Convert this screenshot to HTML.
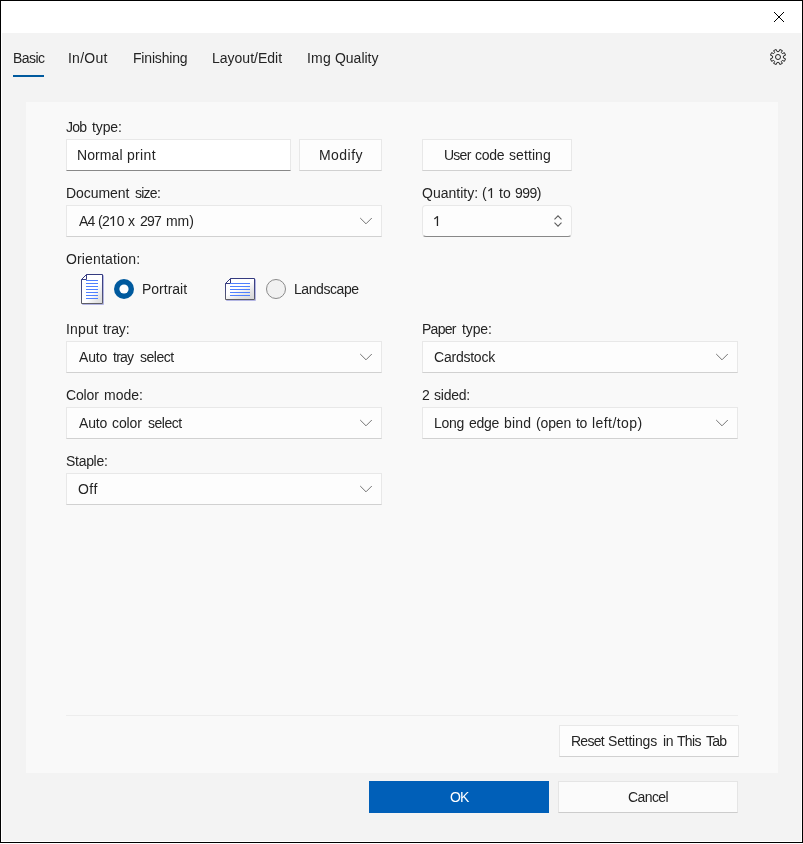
<!DOCTYPE html>
<html lang="en"><head><meta charset="utf-8"><title>Printing Preferences</title>
<style>
html,body{margin:0;padding:0;background:#fff;}
body{width:803px;height:844px;position:relative;overflow:hidden;font-family:"Liberation Sans",sans-serif;font-size:14px;color:#242424;}
.a,.t,.dd,.btn,.box{position:absolute;}
.one{display:inline-block;vertical-align:baseline;overflow:visible;}
.t{line-height:16px;white-space:nowrap;display:block;will-change:transform;}
.win{position:absolute;left:0;top:0;width:801px;height:841px;border:1px solid #000;background:#fff;}
.client{position:absolute;left:2px;top:33px;width:799px;height:808px;background:#f3f3f3;}
.panel{position:absolute;left:26px;top:102px;width:752px;height:671px;background:#f9f9f9;}
.dd{background:#fdfdfd;border:1px solid #e8e8e8;border-bottom-color:#d1d1d1;}
.btn{background:#fdfdfd;border:1px solid #e8e8e8;border-bottom-color:#d1d1d1;}
.btn.g{background:#fbfbfb;border-color:#e5e5e5;border-bottom-color:#cccccc;}
.tb{position:absolute;background:#fff;border:1px solid #e8e8e8;border-bottom-color:#888888;}
.num{position:absolute;background:#fdfdfd;border:1px solid #e8e8e8;border-bottom-color:#888888;border-radius:4px;}
</style></head><body>
<div class="win"></div>
<div class="client"></div>
<svg class="a" style="left:772px;top:10px" width="14" height="14" viewBox="0 0 14 14"><path d="M2 2 L12 12 M12 2 L2 12" stroke="#000" stroke-width="1" fill="none"/></svg>
<div class="a" style="left:13px;top:75px;width:31px;height:2px;background:#005a9e"></div>
<svg class="a" style="left:770px;top:49px" width="16" height="16" viewBox="0 0 16 16"><path d="M8.93 2.58 L9.79 0.46 L12.34 1.58 L11.36 3.65 L12.35 4.64 L14.42 3.66 L15.54 6.21 L13.42 7.07 L13.42 8.93 L15.54 9.79 L14.42 12.34 L12.35 11.36 L11.36 12.35 L12.34 14.42 L9.79 15.54 L8.93 13.42 L7.07 13.42 L6.21 15.54 L3.66 14.42 L4.64 12.35 L3.65 11.36 L1.58 12.34 L0.46 9.79 L2.58 8.93 L2.58 7.07 L0.46 6.21 L1.58 3.66 L3.65 4.64 L4.64 3.65 L3.66 1.58 L6.21 0.46 L7.07 2.58 Z" fill="none" stroke="#242424" stroke-width="1" stroke-linejoin="round"/><circle cx="8" cy="8" r="2.5" fill="none" stroke="#242424" stroke-width="1"/></svg>
<div class="panel"></div>

<div class="tb" style="left:66px;top:139px;width:223px;height:30px"></div>
<div class="btn" style="left:299px;top:139px;width:81px;height:30px"></div>
<div class="btn" style="left:422px;top:139px;width:148px;height:30px"></div>
<div class="dd" style="left:66px;top:205px;width:314px;height:30px"></div><svg class="a" style="left:358px;top:215px" width="16" height="12" viewBox="0 0 16 12"><path d="M2.2 3 L8 8.8 L13.8 3" fill="none" stroke="#757575" stroke-width="1"/></svg>
<div class="num" style="left:422px;top:205px;width:148px;height:30px"></div>
<svg class="a" style="left:550px;top:213px" width="16" height="16" viewBox="0 0 16 16"><path d="M4.5 6.3 L8 2.8 L11.5 6.3 M4.5 9.7 L8 13.2 L11.5 9.7" fill="none" stroke="#5a5a5a" stroke-width="1.05"/></svg>

<!-- portrait icon -->
<svg class="a" style="left:80px;top:273px" width="26" height="34" viewBox="0 0 26 34">
<defs>
<linearGradient id="gs" x1="0" y1="0" x2="0" y2="1"><stop offset="0" stop-color="#353b80"/><stop offset="0.55" stop-color="#454a82"/><stop offset="1" stop-color="#5e5e66"/></linearGradient>
<linearGradient id="gf" x1="0.15" y1="0.15" x2="1" y2="1"><stop offset="0" stop-color="#ffffff"/><stop offset="0.5" stop-color="#ffffff"/><stop offset="0.78" stop-color="#e6e6e6"/><stop offset="1" stop-color="#dadada"/></linearGradient>
<linearGradient id="gf2" x1="0.2" y1="0" x2="0.95" y2="1"><stop offset="0" stop-color="#ffffff"/><stop offset="0.42" stop-color="#ffffff"/><stop offset="0.72" stop-color="#e4e4e4"/><stop offset="1" stop-color="#d6d6d6"/></linearGradient>
</defs>
<path d="M7.5 2.5 H23.5 V31.5 H2.5 V7.5 Z" fill="none" stroke="#b4b6e4" stroke-width="1"/>
<path d="M6.5 1.5 H22.5 V30.5 H1.5 V6.5 Z" fill="url(#gf)" stroke="url(#gs)" stroke-width="1"/>
<path d="M6.5 1.5 V6.5 H1.5 Z" fill="#fff" stroke="#353b80" stroke-width="1" stroke-linejoin="miter"/>
<path d="M6 7.5H18 M6 10.5H18 M6 13.5H18 M6 16.5H18 M6 19.5H18 M6 22.5H18 M6 25.5H18" stroke="#4f80ff" stroke-width="1"/>
</svg>
<!-- landscape icon -->
<svg class="a" style="left:224px;top:277px" width="34" height="26" viewBox="0 0 34 26">
<path d="M7.5 2.5 H31.5 V23.5 H2.5 V7.5 Z" fill="none" stroke="#b4b6e4" stroke-width="1"/>
<path d="M6.5 1.5 H30.5 V22.5 H1.5 V6.5 Z" fill="url(#gf2)" stroke="url(#gs)" stroke-width="1"/>
<path d="M6.5 1.5 V6.5 H1.5 Z" fill="#fff" stroke="#353b80" stroke-width="1"/>
<path d="M6 6.5H26 M6 9.5H26 M6 12.5H26 M6 15.5H26 M6 18.5H26" stroke="#4f80ff" stroke-width="1"/>
</svg>
<!-- radios -->
<svg class="a" style="left:112px;top:277px" width="24" height="24" viewBox="0 0 24 24"><circle cx="12" cy="12" r="10" fill="#005a9e"/><circle cx="12" cy="12" r="4.6" fill="#fff"/></svg>
<svg class="a" style="left:264px;top:277px" width="24" height="24" viewBox="0 0 24 24"><circle cx="12" cy="12" r="9.5" fill="#f1f1f1" stroke="#8a8a8a" stroke-width="1"/></svg>

<div class="dd" style="left:66px;top:341px;width:314px;height:30px"></div><svg class="a" style="left:358px;top:351px" width="16" height="12" viewBox="0 0 16 12"><path d="M2.2 3 L8 8.8 L13.8 3" fill="none" stroke="#757575" stroke-width="1"/></svg>
<div class="dd" style="left:422px;top:341px;width:314px;height:30px"></div><svg class="a" style="left:714px;top:351px" width="16" height="12" viewBox="0 0 16 12"><path d="M2.2 3 L8 8.8 L13.8 3" fill="none" stroke="#757575" stroke-width="1"/></svg>
<div class="dd" style="left:66px;top:407px;width:314px;height:30px"></div><svg class="a" style="left:358px;top:417px" width="16" height="12" viewBox="0 0 16 12"><path d="M2.2 3 L8 8.8 L13.8 3" fill="none" stroke="#757575" stroke-width="1"/></svg>
<div class="dd" style="left:422px;top:407px;width:314px;height:30px"></div><svg class="a" style="left:714px;top:417px" width="16" height="12" viewBox="0 0 16 12"><path d="M2.2 3 L8 8.8 L13.8 3" fill="none" stroke="#757575" stroke-width="1"/></svg>
<div class="dd" style="left:66px;top:473px;width:314px;height:30px"></div><svg class="a" style="left:358px;top:483px" width="16" height="12" viewBox="0 0 16 12"><path d="M2.2 3 L8 8.8 L13.8 3" fill="none" stroke="#757575" stroke-width="1"/></svg>

<div class="a" style="left:66px;top:715px;width:672px;height:1px;background:#ededed"></div>
<div class="btn" style="left:559px;top:725px;width:178px;height:30px"></div>
<div class="a" style="left:369px;top:781px;width:180px;height:32px;background:#005fb8"></div>
<div class="btn g" style="left:558px;top:781px;width:178px;height:30px"></div>

<span class="t" id="tab1_0" style="left:13px;top:50px;letter-spacing:-0.547px;">Basic</span>
<span class="t" id="tab2_0" style="left:68px;top:50px;letter-spacing:0.235px;">In/Out</span>
<span class="t" id="tab3_0" style="left:133px;top:50px;letter-spacing:-0.184px;">Finishing</span>
<span class="t" id="tab4_0" style="left:212px;top:50px;letter-spacing:-0.002px;">Layout/Edit</span>
<span class="t" id="tab5_0" style="left:307px;top:50px;letter-spacing:0.178px;">Img</span>
<span class="t" id="tab5_1" style="left:335px;top:50px;letter-spacing:-0.028px;">Quality</span>
<span class="t" id="l1_0" style="left:66px;top:119px;letter-spacing:-0.750px;">Job</span>
<span class="t" id="l1_1" style="left:92px;top:119px;letter-spacing:-0.118px;">type:</span>
<span class="t" id="v1_0" style="left:77px;top:147px;letter-spacing:0.101px;">Normal</span>
<span class="t" id="v1_1" style="left:127px;top:147px;letter-spacing:0.322px;">print</span>
<span class="t" id="b1_0" style="left:319px;top:147px;letter-spacing:0.458px;">Modify</span>
<span class="t" id="b2_0" style="left:444px;top:147px;letter-spacing:-0.750px;">User</span>
<span class="t" id="b2_1" style="left:475px;top:147px;letter-spacing:-0.249px;">code</span>
<span class="t" id="b2_2" style="left:509px;top:147px;letter-spacing:0.087px;">setting</span>
<span class="t" id="l2_0" style="left:66px;top:185px;letter-spacing:-0.057px;">Document</span>
<span class="t" id="l2_1" style="left:135px;top:185px;letter-spacing:-0.750px;">size:</span>
<span class="t" id="v2_0" style="left:79px;top:213px;letter-spacing:-0.750px;">A4</span>
<span class="t" id="v2_1" style="left:98px;top:213px;letter-spacing:-0.699px;">(2<svg class="one" width="7.8" height="10" viewBox="0 0 7.8 10"><path d="M4.45 0.15 V10" stroke="#242424" stroke-width="1.3" fill="none"/><path d="M4.3 0.55 L1.35 2.95" stroke="#242424" stroke-width="1.1" fill="none"/></svg>0</span>
<span class="t" id="v2_2" style="left:128px;top:213px;letter-spacing:0.000px;">x</span>
<span class="t" id="v2_3" style="left:140px;top:213px;letter-spacing:-0.750px;">297</span>
<span class="t" id="v2_4" style="left:166px;top:213px;letter-spacing:-0.045px;">mm)</span>
<span class="t" id="l3_0" style="left:422px;top:185px;letter-spacing:0.013px;">Quantity:</span>
<span class="t" id="l3_1" style="left:482px;top:185px;letter-spacing:0.275px;">(<svg class="one" width="7.8" height="10" viewBox="0 0 7.8 10"><path d="M4.45 0.15 V10" stroke="#242424" stroke-width="1.3" fill="none"/><path d="M4.3 0.55 L1.35 2.95" stroke="#242424" stroke-width="1.1" fill="none"/></svg></span>
<span class="t" id="l3_2" style="left:499px;top:185px;letter-spacing:0.122px;">to</span>
<span class="t" id="l3_3" style="left:515px;top:185px;letter-spacing:-0.567px;">999)</span>
<span class="t" id="v3_0" style="left:433px;top:213px;letter-spacing:0.000px;"><svg class="one" width="7.8" height="10" viewBox="0 0 7.8 10"><path d="M4.45 0.15 V10" stroke="#242424" stroke-width="1.3" fill="none"/><path d="M4.3 0.55 L1.35 2.95" stroke="#242424" stroke-width="1.1" fill="none"/></svg></span>
<span class="t" id="l4_0" style="left:66px;top:251px;letter-spacing:0.152px;">Orientation:</span>
<span class="t" id="r1_0" style="left:142px;top:281px;letter-spacing:-0.001px;">Portrait</span>
<span class="t" id="r2_0" style="left:294px;top:281px;letter-spacing:-0.436px;">Landscape</span>
<span class="t" id="l5_0" style="left:66px;top:321px;letter-spacing:0.189px;">Input</span>
<span class="t" id="l5_1" style="left:103px;top:321px;letter-spacing:-0.165px;">tray:</span>
<span class="t" id="v5_0" style="left:79px;top:349px;letter-spacing:-0.202px;">Auto</span>
<span class="t" id="v5_1" style="left:113px;top:349px;letter-spacing:-0.750px;">tray</span>
<span class="t" id="v5_2" style="left:140px;top:349px;letter-spacing:-0.462px;">select</span>
<span class="t" id="l6_0" style="left:422px;top:321px;letter-spacing:-0.728px;">Paper</span>
<span class="t" id="l6_1" style="left:462px;top:321px;letter-spacing:-0.126px;">type:</span>
<span class="t" id="v6_0" style="left:434px;top:349px;letter-spacing:-0.227px;">Cardstock</span>
<span class="t" id="l7_0" style="left:66px;top:387px;letter-spacing:-0.138px;">Color</span>
<span class="t" id="l7_1" style="left:104px;top:387px;letter-spacing:0.010px;">mode:</span>
<span class="t" id="v7_0" style="left:79px;top:415px;letter-spacing:-0.208px;">Auto</span>
<span class="t" id="v7_1" style="left:112px;top:415px;letter-spacing:-0.106px;">color</span>
<span class="t" id="v7_2" style="left:148px;top:415px;letter-spacing:-0.467px;">select</span>
<span class="t" id="l8_0" style="left:422px;top:387px;letter-spacing:0.000px;">2</span>
<span class="t" id="l8_1" style="left:434px;top:387px;letter-spacing:-0.237px;">sided:</span>
<span class="t" id="v8_0" style="left:434px;top:415px;letter-spacing:-0.300px;">Long</span>
<span class="t" id="v8_1" style="left:469px;top:415px;letter-spacing:-0.327px;">edge</span>
<span class="t" id="v8_2" style="left:504px;top:415px;letter-spacing:0.215px;">bind</span>
<span class="t" id="v8_3" style="left:536px;top:415px;letter-spacing:-0.129px;">(open</span>
<span class="t" id="v8_4" style="left:576px;top:415px;letter-spacing:-0.298px;">to</span>
<span class="t" id="v8_5" style="left:592px;top:415px;letter-spacing:0.439px;">left/top)</span>
<span class="t" id="l9_0" style="left:66px;top:453px;letter-spacing:-0.295px;">Staple:</span>
<span class="t" id="v9_0" style="left:78px;top:481px;letter-spacing:0.433px;">Off</span>
<span class="t" id="b3_0" style="left:571px;top:733px;letter-spacing:-0.750px;">Reset</span>
<span class="t" id="b3_1" style="left:608px;top:733px;letter-spacing:-0.205px;">Settings</span>
<span class="t" id="b3_2" style="left:663px;top:733px;letter-spacing:-0.307px;">in</span>
<span class="t" id="b3_3" style="left:677px;top:733px;letter-spacing:-0.691px;">This</span>
<span class="t" id="b3_4" style="left:706px;top:733px;letter-spacing:-0.750px;">Tab</span>
<span class="t" id="b4_0" style="left:450px;top:789px;letter-spacing:-1.000px;color:#ffffff;">OK</span>
<span class="t" id="b5_0" style="left:628px;top:789px;letter-spacing:-0.596px;">Cancel</span>
</body></html>
